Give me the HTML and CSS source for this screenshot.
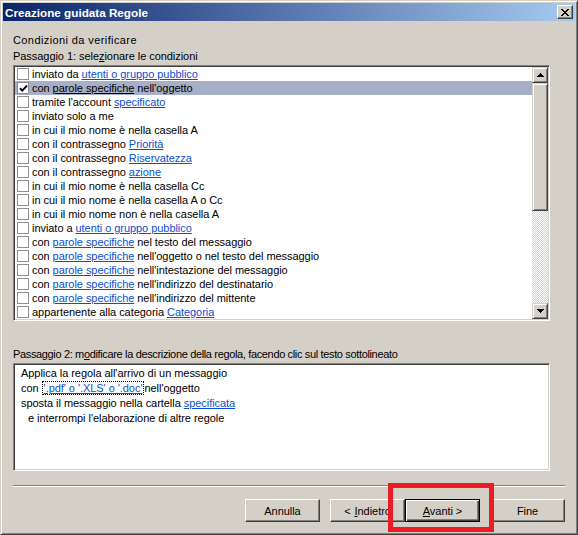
FILE: index.html
```html
<!DOCTYPE html>
<html lang="it">
<head>
<meta charset="utf-8">
<title>Creazione guidata Regole</title>
<link rel="stylesheet" href="styles.css">
</head>
<body>
<div class="window">
  <div class="titlebar">
    <span class="title">Creazione guidata Regole</span>
    <span class="close"><svg width="8" height="7" viewBox="0 0 8 7" shape-rendering="crispEdges"><path d="M0 0h2l2 2.5L6 0h2L5 3.5 8 7H6L4 4.5 2 7H0l3-3.5z" fill="#000"/></svg></span>
  </div>
  <div class="content">
    <div class="label">Condizioni da verificare</div>
    <div class="label">Passaggio 1: sele<u>z</u>ionare le condizioni</div>
    <div class="listbox">
      <ul class="items">
        <li class="item"><span class="cb"></span><span>inviato da <a class="link">utenti o gruppo pubblico</a></span></li>
        <li class="item selected"><span class="cb"><svg width="9" height="9" viewBox="0 0 9 9"><path d="M1 4.2 L3.3 6.6 L8 1.6" stroke="#000" stroke-width="2" fill="none"/></svg></span><span>con <a class="link">parole specifiche</a> nell'oggetto</span></li>
        <li class="item"><span class="cb"></span><span>tramite l'account <a class="link">specificato</a></span></li>
        <li class="item"><span class="cb"></span><span>inviato solo a me</span></li>
        <li class="item"><span class="cb"></span><span>in cui il mio nome è nella casella A</span></li>
        <li class="item"><span class="cb"></span><span>con il contrassegno <a class="link">Priorità</a></span></li>
        <li class="item"><span class="cb"></span><span>con il contrassegno <a class="link">Riservatezza</a></span></li>
        <li class="item"><span class="cb"></span><span>con il contrassegno <a class="link">azione</a></span></li>
        <li class="item"><span class="cb"></span><span>in cui il mio nome è nella casella Cc</span></li>
        <li class="item"><span class="cb"></span><span>in cui il mio nome è nella casella A o Cc</span></li>
        <li class="item"><span class="cb"></span><span>in cui il mio nome non è nella casella A</span></li>
        <li class="item"><span class="cb"></span><span>inviato a <a class="link">utenti o gruppo pubblico</a></span></li>
        <li class="item"><span class="cb"></span><span>con <a class="link">parole specifiche</a> nel testo del messaggio</span></li>
        <li class="item"><span class="cb"></span><span>con <a class="link">parole specifiche</a> nell'oggetto o nel testo del messaggio</span></li>
        <li class="item"><span class="cb"></span><span>con <a class="link">parole specifiche</a> nell'intestazione del messaggio</span></li>
        <li class="item"><span class="cb"></span><span>con <a class="link">parole specifiche</a> nell'indirizzo del destinatario</span></li>
        <li class="item"><span class="cb"></span><span>con <a class="link">parole specifiche</a> nell'indirizzo del mittente</span></li>
        <li class="item"><span class="cb"></span><span>appartenente alla categoria <a class="link">Categoria</a></span></li>
      </ul>
      <div class="scrollbar">
        <div class="sb-btn"><svg width="7" height="4" viewBox="0 0 7 4" shape-rendering="crispEdges"><path d="M3 0h1v1h1v1h1v1h1v1H0V3h1V2h1V1h1z" fill="#000"/></svg></div>
        <div class="sb-thumb"></div>
        <div class="sb-track"></div>
        <div class="sb-btn"><svg width="7" height="4" viewBox="0 0 7 4" shape-rendering="crispEdges"><path d="M0 0h7v1H6v1H5v1H4v1H3V3H2V2H1V1H0z" fill="#000"/></svg></div>
      </div>
    </div>
    <div class="label step2">Passaggio 2: m<u>o</u>dificare la descrizione della regola, facendo clic sul testo sottolineato</div>
    <div class="desc">
      <div class="line">Applica la regola all'arrivo di un messaggio</div>
      <div class="line">con <span class="focus"><a class="link">'.pdf' o '.XLS' o '.doc'</a></span>nell'oggetto</div>
      <div class="line">sposta il messaggio nella cartella <a class="link">specificata</a></div>
      <div class="line indent">e interrompi l'elaborazione di altre regole</div>
    </div>
    <div class="separator"></div>
    <div class="buttons">
      <div class="btn gap">Annulla</div>
      <div class="btn"><span class="lt">&lt;</span><u>I</u>ndietro</div>
      <div class="btn default gap"><span><u>A</u>vanti &gt;</span></div>
      <div class="btn">Fine</div>
    </div>
  </div>
  <div class="annotation"></div>
</div>
</body>
</html>
```
FILE: styles.css
```css
html, body {
  margin: 0;
  padding: 0;
  background: #d4d0c8;
}

body {
  font-family: "Liberation Sans", Arial, sans-serif;
  font-size: 11px;
  letter-spacing: -0.05px;
  color: #000;
}

.window {
  position: relative;
  width: 578px;
  height: 535px;
  box-sizing: border-box;
  border: 1px solid;
  border-color: #d4d0c8 #404040 #404040 #d4d0c8;
  box-shadow: inset 1px 1px #fff, inset -1px -1px #808080;
  padding: 2px;
  background: #d4d0c8;
}

.titlebar {
  height: 18px;
  display: flex;
  align-items: center;
  justify-content: space-between;
  padding: 0 2px;
  background: linear-gradient(to right, #0a246a, #a6caf0);
}

.title {
  color: #fff;
  font-family: "Liberation Sans", Arial, sans-serif;
  font-weight: bold;
  font-size: 11.7px;
  letter-spacing: 0;
}

.close {
  width: 16px;
  height: 14px;
  box-sizing: border-box;
  background: #d4d0c8;
  border: 1px solid;
  border-color: #fff #404040 #404040 #fff;
  box-shadow: inset -1px -1px #808080;
  display: flex;
  align-items: center;
  justify-content: center;
}

.content {
  padding: 12px 10px 0 10px;
}

.label {
  height: 14px;
  line-height: 14px;
  white-space: nowrap;
}

.label:first-child {
  letter-spacing: 0.4px;
}

.label + .label {
  margin-top: 2px;
}

.listbox,
.desc {
  width: 537px;
  box-sizing: border-box;
  border: 1px solid;
  border-color: #808080 #fff #fff #808080;
  box-shadow: inset 1px 1px #404040, inset -1px -1px #d4d0c8;
  background: #fff;
}

.listbox {
  margin-top: 2px;
  height: 256px;
  padding: 1px;
  display: flex;
}

.items {
  flex: 1;
  list-style: none;
  margin: 0;
  padding: 0;
  overflow: hidden;
}

.item {
  height: 14px;
  line-height: 14px;
  display: flex;
  align-items: center;
  padding-left: 2px;
  white-space: nowrap;
}

.item.selected {
  background: #a7aec8;
}

.item.selected .link {
  color: #000;
}

.cb {
  width: 12px;
  height: 12px;
  box-sizing: border-box;
  border: 1px solid #8f8f8f;
  background: #fff;
  margin-right: 3px;
  display: flex;
  align-items: center;
  justify-content: center;
  flex: none;
}

.link {
  color: #0b4fd0;
  text-decoration: underline;
}

.scrollbar {
  width: 16px;
  display: flex;
  flex-direction: column;
}

.sb-btn,
.sb-thumb {
  box-sizing: border-box;
  background: #d4d0c8;
  border: 1px solid;
  border-color: #d4d0c8 #404040 #404040 #d4d0c8;
  box-shadow: inset 1px 1px #fff, inset -1px -1px #808080;
}

.sb-btn {
  height: 16px;
  display: flex;
  align-items: center;
  justify-content: center;
}

.sb-thumb {
  height: 128px;
}

.sb-track {
  flex: 1;
  background-image: repeating-conic-gradient(#fff 0 25%, #d4d0c8 0 50%);
  background-size: 2px 2px;
}

.step2 {
  margin-top: 26px;
  letter-spacing: -0.35px;
}

.desc {
  margin-top: 2px;
  height: 108px;
  padding: 2px 7px;
}

.line {
  height: 15px;
  line-height: 15px;
  white-space: nowrap;
}

.indent {
  padding-left: 7px;
}

.focus {
  border: 1px dotted #000;
  padding: 0 1px;
}

.separator {
  margin-top: 14px;
  height: 0;
  border-top: 1px solid #808080;
  border-bottom: 1px solid #fff;
}

.buttons {
  margin-top: 12px;
  display: flex;
  justify-content: flex-end;
}

.btn {
  width: 75px;
  height: 23px;
  box-sizing: border-box;
  background: #d4d0c8;
  border: 1px solid;
  border-color: #fff #404040 #404040 #fff;
  box-shadow: inset -1px -1px #808080;
  display: flex;
  align-items: center;
  justify-content: center;
  white-space: nowrap;
}

.lt {
  margin-right: 4px;
}

.btn.gap {
  margin-right: 10px;
}

.btn.default {
  border-color: #000;
  box-shadow: inset 1px 1px #fff, inset -1px -1px #404040, inset -2px -2px #808080;
}

.annotation {
  position: absolute;
  left: 387px;
  top: 482px;
  width: 106px;
  height: 49px;
  box-sizing: border-box;
  border: 5px solid #ed1c24;
}
```
